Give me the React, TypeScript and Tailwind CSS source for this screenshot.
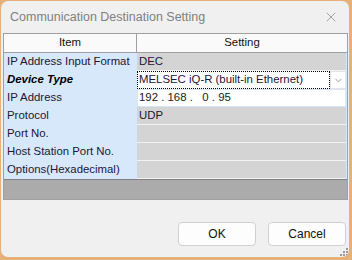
import { ChevronDown, X } from 'lucide-react';

const font = { fontFamily: '"Liberation Sans", Arial, sans-serif' };

type Row = { item: string; value?: string; kind: 'gray' | 'combo' | 'ip' };

const rows: Row[] = [
  { item: 'IP Address Input Format', value: 'DEC', kind: 'gray' },
  { item: 'Device Type', value: 'MELSEC iQ-R (built-in Ethernet)', kind: 'combo' },
  { item: 'IP Address', value: '192 . 168 .   0 . 95', kind: 'ip' },
  { item: 'Protocol', value: 'UDP', kind: 'gray' },
  { item: 'Port No.', kind: 'gray' },
  { item: 'Host Station Port No.', kind: 'gray' },
  { item: 'Options(Hexadecimal)', kind: 'gray' },
];

function ValueCell({ row }: { row: Row }) {
  if (row.kind === 'combo') {
    return (
      <div className="flex h-full items-stretch bg-white">
        <div className="flex flex-1 items-center border border-dotted border-black pl-[1px] text-[#241436]">
          {row.value}
        </div>
        <div className="flex w-[16px] items-center justify-center border border-[#e3e3e3] bg-white">
          <ChevronDown className="h-[11px] w-[11px] text-[#6f6f6f]" strokeWidth={1.4} />
        </div>
      </div>
    );
  }
  if (row.kind === 'ip') {
    return (
      <div className="flex h-full items-center whitespace-pre border border-[#d4e6f8] bg-white pl-[1px] text-[#1a1a1a]">
        {row.value}
      </div>
    );
  }
  return (
    <div className="flex h-full items-center border-b border-[#f2f2f2] bg-[#d4d4d4] pl-[2px] text-[#241436]">
      {row.value}
    </div>
  );
}

export default function App() {
  return (
    <div className="h-[260px] w-[352px] bg-[#e6b07a] pb-[3px] pl-px pr-[3px] pt-px" style={font}>
      <div className="relative flex h-full flex-col overflow-hidden rounded-[7px] bg-[#f0f0f0]">
        <div className="flex h-[32px] items-center justify-between pl-[9px] pr-[10px]">
          <span className="text-[12.5px] text-[#808080]">Communication Destination Setting</span>
          <X className="h-[16px] w-[16px] text-[#7a7a7a]" strokeWidth={1} />
        </div>

        <div className="ml-[2px] mr-px flex flex-col border border-[#a0a0a0] text-[11.4px]">
          <div className="flex h-[19px] border-b border-[#a0a0a0] bg-[#fafafa] text-[#111]">
            <div className="flex w-[133px] items-center justify-center border-r border-[#a0a0a0]">Item</div>
            <div className="flex flex-1 items-center justify-center">Setting</div>
          </div>
          <div className="flex flex-col bg-[#d6e8fa]">
            {rows.map((row) => (
              <div key={row.item} className="flex h-[18px]">
                <div
                  className={
                    row.kind === 'combo'
                      ? 'flex w-[133px] items-center pl-[3px] font-bold italic text-black'
                      : 'flex w-[133px] items-center pl-[3px] text-[#241436]'
                  }
                >
                  {row.item}
                </div>
                <div className="mr-[1px] flex-1">
                  <ValueCell row={row} />
                </div>
              </div>
            ))}
          </div>
          <div className="h-[20px] border-t border-[#808080] bg-[#ababab]" />
        </div>

        <div className="mt-auto flex justify-end gap-[12px] pb-[11px] pr-[3px]">
          <button className="h-[24px] w-[78px] rounded-[4px] border border-[#d0d0d0] bg-[#fdfdfd] text-[12px] text-[#111]">
            OK
          </button>
          <button className="h-[24px] w-[78px] rounded-[4px] border border-[#d0d0d0] bg-[#fdfdfd] text-[12px] text-[#111]">
            Cancel
          </button>
        </div>

        <svg className="absolute bottom-[1px] right-[1px]" width="8" height="8" viewBox="0 0 8 8">
          <rect x="6" y="0" width="2" height="2" fill="#9a9a9a" />
          <rect x="3" y="3" width="2" height="2" fill="#9a9a9a" />
          <rect x="6" y="3" width="2" height="2" fill="#9a9a9a" />
          <rect x="0" y="6" width="2" height="2" fill="#9a9a9a" />
          <rect x="3" y="6" width="2" height="2" fill="#9a9a9a" />
          <rect x="6" y="6" width="2" height="2" fill="#9a9a9a" />
        </svg>
      </div>
    </div>
  );
}
